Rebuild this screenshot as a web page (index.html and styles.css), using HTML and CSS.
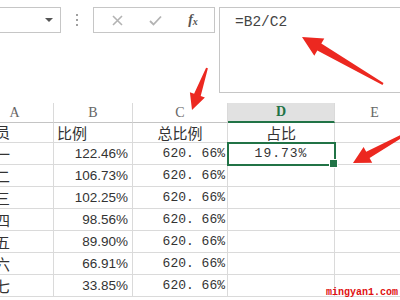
FILE: index.html
```html
<!DOCTYPE html>
<html lang="zh-CN">
<head>
    <meta charset="UTF-8">
    <title>占比公式</title>
    <link rel="stylesheet" href="styles.css">
</head>
<body>
    <div class="toolbar">
        <div class="namebox"><span class="caret"></span></div>
        <div class="grip"><span></span><span></span><span></span></div>
        <div class="fbtns">
            <span>
                <svg width="11" height="11" viewBox="0 0 11 11"><path d="M1 1L10 10M10 1L1 10" stroke="#b3b3b3" stroke-width="1.6" fill="none"/></svg>
            </span>
            <span>
                <svg width="13" height="11" viewBox="0 0 13 11"><path d="M1 6L4.5 9.5L12 1.5" stroke="#b3b3b3" stroke-width="1.8" fill="none"/></svg>
            </span>
            <span class="fx">f<small>x</small></span>
        </div>
        <div class="formula">=B2/C2</div>
    </div>

    <div class="sheet">
        <div class="col">A</div>
        <div class="col">B</div>
        <div class="col">C</div>
        <div class="col on">D</div>
        <div class="col">E</div>

        <div class="name">员</div>
        <div class="cn">比例</div>
        <div class="cn mid">总比例</div>
        <div class="cn mid">占比</div>
        <div></div>

        <div class="name">一</div>
        <div class="num">122.46%</div>
        <div class="mono">620. 66%</div>
        <div class="sel">19.73%</div>
        <div></div>

        <div class="name">二</div>
        <div class="num">106.73%</div>
        <div class="mono">620. 66%</div>
        <div></div>
        <div></div>

        <div class="name">三</div>
        <div class="num">102.25%</div>
        <div class="mono">620. 66%</div>
        <div></div>
        <div></div>

        <div class="name">四</div>
        <div class="num">98.56%</div>
        <div class="mono">620. 66%</div>
        <div></div>
        <div></div>

        <div class="name">五</div>
        <div class="num">89.90%</div>
        <div class="mono">620. 66%</div>
        <div></div>
        <div></div>

        <div class="name">六</div>
        <div class="num">66.91%</div>
        <div class="mono">620. 66%</div>
        <div></div>
        <div></div>

        <div class="name">七</div>
        <div class="num">33.85%</div>
        <div class="mono">620. 66%</div>
        <div></div>
        <div></div>
    </div>

    <!-- red arrows drawn over the screenshot -->
    <svg class="arrows" width="400" height="300" viewBox="0 0 400 300">
        <polygon points="302,37 324.3,38.4 321.3,43.5 383.5,83.1 382.5,84.9 317.3,50.5 314.3,55.7" />
        <polygon points="192,110 204.9,97.6 200.7,96.1 207.9,68.3 206.1,67.7 194.1,93.7 189.9,92.2" />
        <polygon points="353,163 372.2,162.7 369.6,157.9 402.7,137.3 401.3,134.7 366.2,151.7 363.6,146.9" />
    </svg>

    <div class="mark">mingyan1.com</div>
</body>
</html>
```

FILE: styles.css
```css
* {
    box-sizing: border-box;
}
body {
    margin: 0;
    width: 400px;
    height: 300px;
    overflow: hidden;
    position: relative;
    background: #fff;
    color: #333;
    font-family: "Liberation Sans", "Noto Sans CJK SC", sans-serif;
}
.toolbar {
    display: flex;
    align-items: flex-start;
    padding-top: 7px;
    height: 103px;
}
.namebox {
    flex: none;
    margin-left: -10px;
    width: 71px;
    height: 26px;
    border: 1px solid #c6c6c6;
    display: flex;
    align-items: center;
    justify-content: flex-end;
    padding-right: 7px;
}
.caret {
    border-left: 4px solid transparent;
    border-right: 4px solid transparent;
    border-top: 4px solid #555;
}
.grip {
    flex: none;
    width: 32px;
    height: 26px;
    display: flex;
    flex-direction: column;
    align-items: center;
    justify-content: center;
    gap: 3px;
}
.grip span {
    width: 2px;
    height: 2px;
    background: #a0a0a0;
}
.fbtns {
    flex: none;
    width: 122px;
    height: 26px;
    border: 1px solid #c6c6c6;
    display: flex;
    align-items: center;
    padding-left: 4px;
}
.fbtns span {
    width: 38px;
    display: flex;
    justify-content: center;
}
.fx {
    font-family: "Liberation Serif", serif;
    font-style: italic;
    font-weight: bold;
    font-size: 14px;
    color: #555;
}
.fx small {
    font-size: 10px;
    margin-top: 4px;
}
.formula {
    flex: none;
    margin-left: 4px;
    width: 190px;
    height: 86px;
    border: 1px solid #c6c6c6;
    padding: 5px 0 0 15px;
    font: 14.5px/18px "Liberation Mono", monospace;
    color: #444;
}
.sheet {
    display: grid;
    grid-template-columns: 78px 79px 95px 107px 80px;
    grid-template-rows: 20px 20px repeat(8, 22px);
    margin-left: -24px;
}
.sheet div {
    border-right: 1px solid #dadada;
    border-bottom: 1px solid #dadada;
    display: flex;
    align-items: flex-end;
    padding: 0 3px 2px;
    font-size: 13.5px;
    line-height: 16px;
    white-space: nowrap;
}
.sheet .col {
    justify-content: center;
    align-items: center;
    padding: 0;
    font-family: "Liberation Serif", serif;
    font-size: 14px;
    color: #666;
    border-bottom-color: #c4c4c4;
}
.sheet .col.on {
    background: #e1e1e1;
    color: #217346;
    font-weight: bold;
    border-bottom: 2px solid #217346;
}
.sheet .name {
    padding-left: 19px;
    padding-bottom: 1px;
    font-family: "Noto Sans CJK SC", sans-serif;
    font-size: 15px;
    line-height: 18px;
    overflow: hidden;
}
.sheet .cn {
    font-family: "Noto Sans CJK SC", sans-serif;
    font-size: 15px;
    line-height: 18px;
    padding-bottom: 0;
}
.sheet .mid {
    justify-content: center;
}
.sheet .num {
    justify-content: flex-end;
    padding-right: 4px;
}
.sheet .mono {
    justify-content: flex-end;
    padding-right: 2px;
    font-family: "Liberation Mono", monospace;
    font-size: 13px;
}
.sheet .sel {
    position: relative;
    z-index: 1;
    outline: 2px solid #217346;
    outline-offset: -1px;
    justify-content: center;
    font-family: "Liberation Mono", monospace;
    font-size: 13px;
    letter-spacing: 1px;
}
.sheet .sel::after {
    content: "";
    position: absolute;
    right: -4px;
    bottom: -4px;
    width: 7px;
    height: 7px;
    background: #217346;
    border: 1px solid #fff;
}
.arrows {
    position: absolute;
    top: 0;
    left: 0;
    fill: #ec2820;
}
.mark {
    position: absolute;
    right: 2px;
    bottom: 1px;
    font: bold 10px/12px "Liberation Mono", monospace;
    color: #e01010;
}
```
